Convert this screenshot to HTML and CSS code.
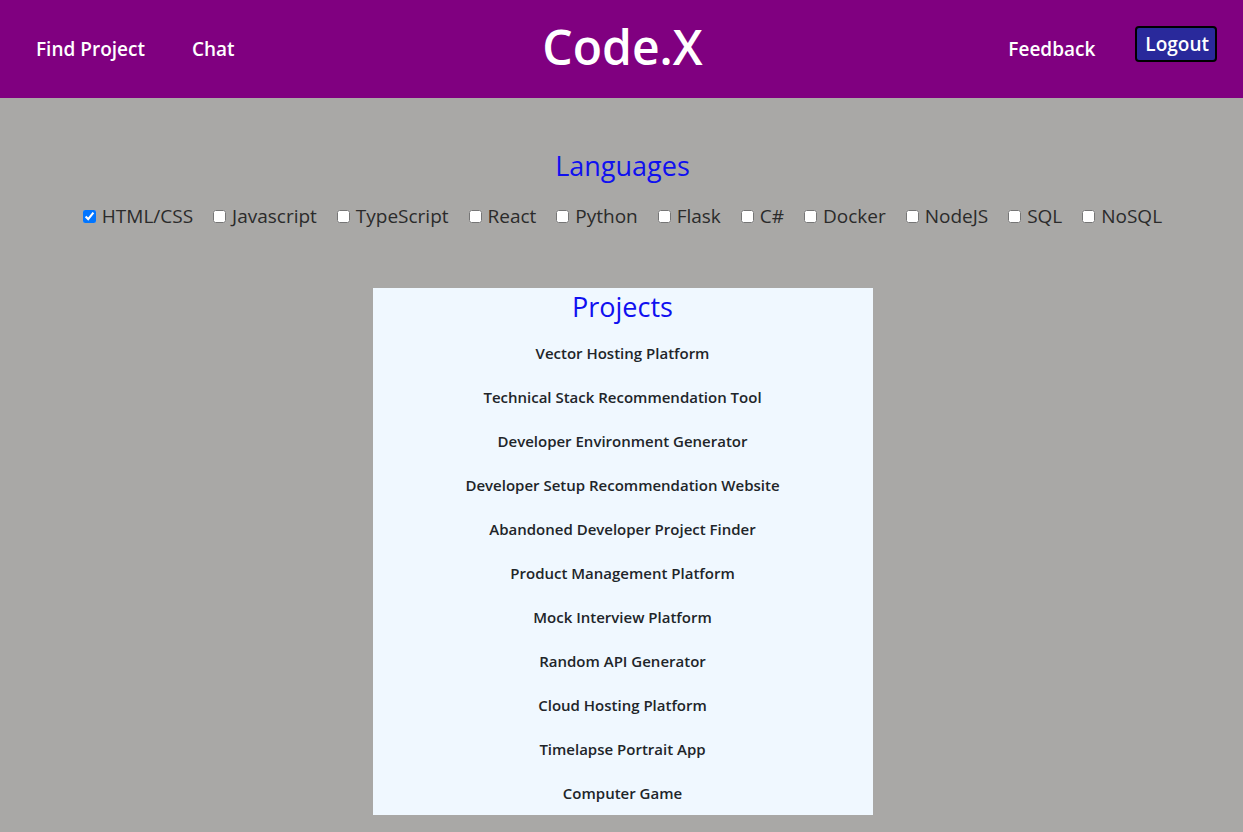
FILE: index.html
```html
<!DOCTYPE html>
<html lang="en">
<head>
<meta charset="utf-8">
<title>Code.X</title>
<link rel="stylesheet" href="styles.css">
</head>
<body>
<header class="topbar">
  <nav class="nav-left">
    <a class="nav-link" href="#">Find Project</a>
    <a class="nav-link" href="#">Chat</a>
  </nav>
  <h1 class="brand">Code.X</h1>
  <nav class="nav-right">
    <a class="nav-link" href="#">Feedback</a>
    <button class="logout">Logout</button>
  </nav>
</header>
<main class="content">
  <section class="languages">
    <h2 class="section-title">Languages</h2>
    <div class="lang-list">
      <label class="lang"><input type="checkbox" checked> HTML/CSS</label>
      <label class="lang"><input type="checkbox"> Javascript</label>
      <label class="lang"><input type="checkbox"> TypeScript</label>
      <label class="lang"><input type="checkbox"> React</label>
      <label class="lang"><input type="checkbox"> Python</label>
      <label class="lang"><input type="checkbox"> Flask</label>
      <label class="lang"><input type="checkbox"> C#</label>
      <label class="lang"><input type="checkbox"> Docker</label>
      <label class="lang"><input type="checkbox"> NodeJS</label>
      <label class="lang"><input type="checkbox"> SQL</label>
      <label class="lang"><input type="checkbox"> NoSQL</label>
    </div>
  </section>
  <section class="projects">
    <h2 class="section-title projects-title">Projects</h2>
    <ul class="project-list">
      <li class="project">Vector Hosting Platform</li>
      <li class="project">Technical Stack Recommendation Tool</li>
      <li class="project">Developer Environment Generator</li>
      <li class="project">Developer Setup Recommendation Website</li>
      <li class="project">Abandoned Developer Project Finder</li>
      <li class="project">Product Management Platform</li>
      <li class="project">Mock Interview Platform</li>
      <li class="project">Random API Generator</li>
      <li class="project">Cloud Hosting Platform</li>
      <li class="project">Timelapse Portrait App</li>
      <li class="project">Computer Game</li>
    </ul>
  </section>
</main>
</body>
</html>
```

FILE: styles.css
```css
html, body {
  margin: 0;
  padding: 0;
}
body {
  background: #a9a8a6;
  font-family: "Open Sans", "Noto Sans", sans-serif;
  color: #212529;
  min-height: 832px;
}
.topbar {
  background: #800080;
  height: 98px;
  display: grid;
  grid-template-columns: 1fr auto 1fr;
  align-items: center;
  padding: 0 26px;
  box-sizing: border-box;
}
.nav-left, .nav-right {
  display: flex;
  align-items: center;
}
.nav-left {
  gap: 47px;
  padding-left: 10px;
}
.nav-right {
  justify-content: flex-end;
  gap: 40px;
}
.nav-link {
  color: #fff;
  text-decoration: none;
  font-weight: 600;
  font-size: 19px;
}
.brand {
  margin: 0;
  color: #fff;
  font-size: 48px;
  font-weight: 600;
  line-height: 1;
  padding-bottom: 4px;
  padding-left: 2px;
}
.logout {
  background: #29299b;
  color: #fff;
  border: 2px solid #000;
  border-radius: 4px;
  font-family: inherit;
  font-weight: 600;
  font-size: 19px;
  padding: 2px 6px 2px 8px;
  height: 36px;
  margin-bottom: 10px;
  cursor: pointer;
}
.content {
  display: flex;
  flex-direction: column;
  align-items: center;
  padding-left: 2px;
}
.languages {
  display: flex;
  flex-direction: column;
  align-items: center;
  padding-top: 49px;
}
.section-title {
  margin: 0;
  color: #1010f0;
  font-weight: 500;
  font-size: 27px;
  line-height: 38px;
}
.lang-list {
  display: flex;
  gap: 20px;
  margin-top: 18px;
}
.lang {
  display: flex;
  align-items: center;
  font-size: 19px;
  color: #2b2b2b;
  white-space: pre;
}
.lang input {
  margin: 0 1px 0 0;
  width: 13px;
  height: 13px;
}
.projects {
  margin-top: 59px;
  width: 500px;
  background: #f0f8ff;
  display: flex;
  flex-direction: column;
  align-items: center;
  padding-bottom: 11px;
}
.projects-title {
  line-height: 38px;
}
.project-list {
  list-style: none;
  margin: 0;
  padding: 0;
  display: flex;
  flex-direction: column;
  align-items: center;
  gap: 22px;
  margin-top: 16px;
}
.project {
  font-size: 15px;
  font-weight: 600;
  line-height: 22px;
}
```
